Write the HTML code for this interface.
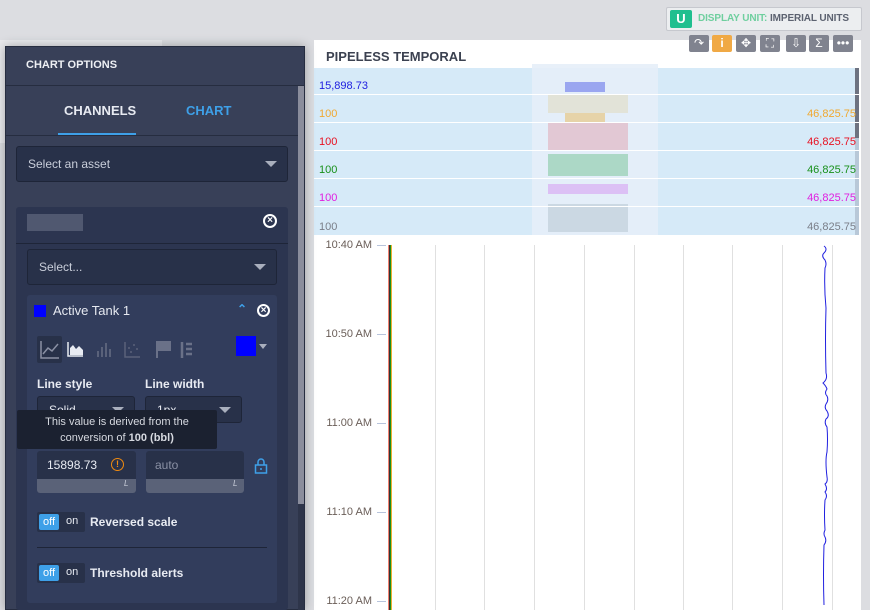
<!DOCTYPE html>
<html><head><style>
*{box-sizing:border-box;margin:0;padding:0}
body{width:870px;height:610px;overflow:hidden;background:#dcdde1;font-family:"Liberation Sans",sans-serif;position:relative}
.a{position:absolute}
.sel{background:#283149;border:1px solid #1e2538;border-radius:3px;color:#c9ceda;font-size:12px;padding-left:11px;display:flex;align-items:center}
.tri{position:absolute;right:10px;top:50%;margin-top:-3px;width:0;height:0;border-left:6px solid transparent;border-right:6px solid transparent;border-top:6px solid #a9afbd}
.t{font-size:11px;color:#6a5e58;text-align:right;width:60px}
.row{position:absolute;left:314px;width:545px;height:27px;font-size:11px}
.row span{position:absolute;bottom:2px}
.tb{position:absolute;top:35px;width:20px;height:17px;background:#80838f;border-radius:2px;color:#fff;font-size:12px;text-align:center;line-height:17px}
</style></head><body>
<div class="a" style="left:0;top:40px;width:162px;height:103px;background:#e9eaed"></div>
<div class="a" style="left:666px;top:7px;width:196px;height:24px;border:1px solid #c6c8ce;background:#eceef0;border-radius:2px"></div>
<div class="a" style="left:670px;top:10px;width:22px;height:18px;background:#1fbf8f;border-radius:2px;color:#fff;font-weight:bold;font-size:13px;text-align:center;line-height:18px">U</div>
<div class="a" style="left:698px;top:13px;font-size:10px;font-weight:bold;color:#5c6270;white-space:nowrap;letter-spacing:-0.1px"><span style="color:#6fcf9f">DISPLAY UNIT:</span> IMPERIAL UNITS</div>
<div class="a" style="left:314px;top:40px;width:547px;height:570px;background:#fff"></div>
<div class="a" style="left:861px;top:40px;width:9px;height:570px;background:#dcdde1"></div>
<div class="a" style="left:326px;top:49px;font-size:13px;font-weight:bold;color:#3b4150">PIPELESS TEMPORAL</div>
<div class="tb" style="left:689px">↷</div>
<div class="tb" style="left:712px;background:#f0a945;font-weight:bold">i</div>
<div class="tb" style="left:736px">✥</div>
<div class="tb" style="left:760px">⛶</div>
<div class="tb" style="left:786px">⇩</div>
<div class="tb" style="left:809px">Σ</div>
<div class="tb" style="left:833px">•••</div>
<div class="a" style="left:314px;top:68px;width:545px;height:167px;background:#d6eaf8"></div>
<div class="a" style="left:532px;top:64px;width:126px;height:171px;background:#e6eef8;opacity:.9"></div>
<div class="a" style="left:565px;top:82px;width:40px;height:10px;background:#9aa6f0"></div>
<div class="a" style="left:548px;top:95px;width:80px;height:18px;background:#e2e3d8"></div>
<div class="a" style="left:565px;top:113px;width:40px;height:10px;background:#e6d3a8"></div>
<div class="a" style="left:548px;top:123px;width:80px;height:28px;background:#e2c8d4"></div>
<div class="a" style="left:548px;top:154px;width:80px;height:22px;background:#acd8c6"></div>
<div class="a" style="left:548px;top:184px;width:80px;height:10px;background:#dcc0f5"></div>
<div class="a" style="left:548px;top:204px;width:80px;height:28px;background:#cbd8e3"></div>
<div class="a" style="left:855px;top:68px;width:4px;height:70px;background:#6d7280"></div>
<div class="a" style="left:855px;top:138px;width:4px;height:97px;background:#b8c8d8"></div>
<div class="row" style="top:68px;border-bottom:1px solid #fff"><span style="left:5px;color:#2020e0">15,898.73</span></div>
<div class="row" style="top:96px;border-bottom:1px solid #fff"><span style="left:5px;color:#f0a830">100</span><span style="right:3px;color:#f0a830">46,825.75</span></div>
<div class="row" style="top:124px;border-bottom:1px solid #fff"><span style="left:5px;color:#e81020">100</span><span style="right:3px;color:#e81020">46,825.75</span></div>
<div class="row" style="top:152px;border-bottom:1px solid #fff"><span style="left:5px;color:#18901a">100</span><span style="right:3px;color:#18901a">46,825.75</span></div>
<div class="row" style="top:180px;border-bottom:1px solid #fff"><span style="left:5px;color:#e020e0">100</span><span style="right:3px;color:#e020e0">46,825.75</span></div>
<div class="row" style="top:208px"><span style="left:5px;color:#7a7e88">100</span><span style="right:3px;color:#7a7e88">46,825.75</span></div>
<svg class="a" style="left:314px;top:235px" width="547" height="375">
<g stroke="#e0e0e0" stroke-width="1">
<line x1="121.5" y1="10" x2="121.5" y2="375"/><line x1="170.5" y1="10" x2="170.5" y2="375"/><line x1="220.5" y1="10" x2="220.5" y2="375"/><line x1="270.5" y1="10" x2="270.5" y2="375"/><line x1="320.5" y1="10" x2="320.5" y2="375"/><line x1="369.5" y1="10" x2="369.5" y2="375"/><line x1="418.5" y1="10" x2="418.5" y2="375"/><line x1="468.5" y1="10" x2="468.5" y2="375"/><line x1="518.5" y1="10" x2="518.5" y2="375"/>
</g>
<g stroke="#b8c4dc"><line x1="63" y1="10.5" x2="72" y2="10.5"/><line x1="63" y1="99.5" x2="72" y2="99.5"/><line x1="63" y1="188.5" x2="72" y2="188.5"/><line x1="63" y1="277.5" x2="72" y2="277.5"/><line x1="63" y1="366.5" x2="72" y2="366.5"/></g>
<rect x="74" y="10" width="1" height="365" fill="#f08070"/><rect x="75" y="10" width="1" height="365" fill="#333"/><rect x="76" y="10" width="1" height="365" fill="#189020"/><rect x="77" y="10" width="1" height="365" fill="#f0b030"/>
<path d="M510 11 q4 3 0 7 q-3 3 1 7 q2 4 0 8 q-1 20 1 40 q-1 30 0 65 q2 6 -3 10 q3 3 4 6 q-3 4 0 7 q2 4 -1 8 q-2 4 1 7 q3 5 -1 8 q-2 4 1 8 q1 12 0 25 q-2 8 0 25 q1 5 -2 7 q3 5 0 8 q3 4 0 8 q-1 15 0 30 q-2 4 0 7 q2 4 -1 8 q-1 30 0 60" fill="none" stroke="#2020e0" stroke-width="1"/>
</svg>
<div class="a t" style="left:312px;top:239px">10:40 AM</div>
<div class="a t" style="left:312px;top:328px">10:50 AM</div>
<div class="a t" style="left:312px;top:417px">11:00 AM</div>
<div class="a t" style="left:312px;top:506px">11:10 AM</div>
<div class="a t" style="left:312px;top:595px">11:20 AM</div>
<div class="a" style="left:5px;top:46px;width:300px;height:564px;background:#384058;border:1px solid #262d40;box-shadow:0 0 10px rgba(0,0,0,.3)"></div>
<div class="a" style="left:6px;top:85px;width:298px;height:1px;background:#262d40"></div>
<div class="a" style="left:26px;top:59px;font-size:11px;font-weight:bold;color:#eef0f4">CHART OPTIONS</div>
<div class="a" style="left:64px;top:103px;font-size:13px;font-weight:bold;color:#e8ebf2">CHANNELS</div>
<div class="a" style="left:186px;top:103px;font-size:13px;font-weight:bold;color:#3ea0e8">CHART</div>
<div class="a" style="left:58px;top:133px;width:78px;height:2px;background:#3ea0e8"></div>
<div class="a" style="left:6px;top:135px;width:292px;height:1px;background:#262d40"></div>
<div class="a" style="left:298px;top:86px;width:6px;height:524px;background:#2e354a"></div>
<div class="a" style="left:298px;top:86px;width:6px;height:418px;background:#8a8d9c"></div>
<div class="a sel" style="left:16px;top:146px;width:272px;height:36px">Select an asset<div class="tri"></div></div>
<div class="a" style="left:16px;top:207px;width:272px;height:403px;background:#2c3550;border-radius:3px"></div>
<div class="a" style="left:16px;top:243px;width:272px;height:1px;background:#1e2538"></div>
<div class="a" style="left:27px;top:214px;width:56px;height:17px;background:#5a6278;opacity:.8"></div>
<div class="a" style="left:263px;top:214px;width:14px;height:14px;border:2px solid #fff;border-radius:50%;color:#fff;font-size:10px;line-height:10px;text-align:center;font-weight:bold">×</div>
<div class="a sel" style="left:27px;top:249px;width:250px;height:36px">Select...<div class="tri"></div></div>
<div class="a" style="left:27px;top:295px;width:250px;height:308px;background:#323d5c;border-radius:3px"></div>
<div class="a" style="left:34px;top:305px;width:12px;height:12px;background:#0000ff"></div>
<div class="a" style="left:53px;top:303px;font-size:13px;color:#e6e9f0">Active Tank 1</div>
<div class="a" style="left:237px;top:302px;font-size:12px;color:#3ea0e8;font-weight:bold">⌃</div>
<div class="a" style="left:257px;top:304px;width:13px;height:13px;border:2px solid #fff;border-radius:50%;color:#fff;font-size:10px;line-height:9px;text-align:center;font-weight:bold">×</div>
<div class="a" style="left:37px;top:336px;width:25px;height:27px;background:#283149;border-radius:2px"></div>
<svg class="a" style="left:40px;top:338px" width="160" height="22" fill="none">
<path d="M1 3v17h18M3 16l5-6 4 3 6-7" stroke="#8a90a4" stroke-width="1.5"/>
<path d="M28 4v14h15" stroke="#e8ebf2" stroke-width="1.5"/><path d="M30 17v-7l3-3 3 4 3-3 4 4v5z" fill="#e8ebf2"/>
<path d="M58 19v-6M62 19v-10M66 19v-14M70 19v-8" stroke="#5a627a" stroke-width="2"/>
<path d="M85 4v15h15M88 10l2 0M93 7l2 0M96 11l2 0M90 14l2 0" stroke="#5a627a" stroke-width="1.5"/>
<path d="M117 3v17M117 4h13v8h-13" fill="#6a7188" stroke="#6a7188" stroke-width="2"/>
<path d="M142 4v16M146 6h6M146 11h6M146 16h6" stroke="#6a7188" stroke-width="2.5"/>
</svg>
<div class="a" style="left:236px;top:336px;width:20px;height:20px;background:#0000ff"></div>
<div class="a" style="left:259px;top:344px;border-left:4px solid transparent;border-right:4px solid transparent;border-top:5px solid #a9afbd"></div>
<div class="a" style="left:37px;top:377px;font-size:12px;font-weight:bold;color:#e8ebf2">Line style</div>
<div class="a" style="left:145px;top:377px;font-size:12px;font-weight:bold;color:#e8ebf2">Line width</div>
<div class="a sel" style="left:37px;top:396px;width:98px;height:27px;color:#e8ebf2">Solid<div class="tri"></div></div>
<div class="a sel" style="left:145px;top:396px;width:97px;height:27px;color:#e8ebf2">1px<div class="tri"></div></div>
<div class="a" style="left:17px;top:410px;width:200px;height:39px;background:#1b2130;color:#d6d9e0;font-size:11px;text-align:center;line-height:16px;padding-top:4px;border-radius:2px">This value is derived from the<br>conversion of <b>100 (bbl)</b></div>
<div class="a" style="left:37px;top:451px;width:99px;height:42px;background:#283149;border-radius:3px;overflow:hidden"><div style="position:absolute;left:0;bottom:0;width:100%;height:14px;background:#5a6278"></div></div>
<div class="a" style="left:47px;top:458px;font-size:12px;color:#e8ebf2">15898.73</div>
<div class="a" style="left:111px;top:458px;width:13px;height:13px;border:1.5px solid #f08a10;border-radius:50%;color:#f08a10;font-size:9px;text-align:center;line-height:10px;font-weight:bold">!</div>
<div class="a" style="left:146px;top:451px;width:98px;height:42px;background:#283149;border-radius:3px;overflow:hidden"><div style="position:absolute;left:0;bottom:0;width:100%;height:14px;background:#5a6278"></div></div>
<div class="a" style="left:155px;top:458px;font-size:12px;color:#8a90a4">auto</div>
<div class="a" style="left:124px;top:479px;font-size:8px;color:#c9ceda;font-style:italic">L</div>
<div class="a" style="left:233px;top:479px;font-size:8px;color:#c9ceda;font-style:italic">L</div>
<svg class="a" style="left:254px;top:458px" width="14" height="16" fill="none" stroke="#3ea0e8" stroke-width="1.5"><rect x="1.5" y="7" width="11" height="8"/><path d="M4 7V4a3 3 0 0 1 6 0v3M7 10v2"/></svg>
<div class="a" style="left:37px;top:512px;width:48px;height:20px;background:#283149;border-radius:2px"></div>
<div class="a" style="left:39px;top:514px;width:20px;height:16px;background:#3ea0e8;border-radius:2px;color:#fff;font-size:11px;text-align:center;line-height:16px">off</div>
<div class="a" style="left:66px;top:515px;font-size:11px;color:#e8ebf2">on</div>
<div class="a" style="left:90px;top:515px;font-size:12px;font-weight:bold;color:#e8ebf2">Reversed scale</div>
<div class="a" style="left:37px;top:547px;width:230px;height:1px;background:#1e2538"></div>
<div class="a" style="left:37px;top:563px;width:48px;height:20px;background:#283149;border-radius:2px"></div>
<div class="a" style="left:39px;top:565px;width:20px;height:16px;background:#3ea0e8;border-radius:2px;color:#fff;font-size:11px;text-align:center;line-height:16px">off</div>
<div class="a" style="left:66px;top:566px;font-size:11px;color:#e8ebf2">on</div>
<div class="a" style="left:90px;top:566px;font-size:12px;font-weight:bold;color:#e8ebf2">Threshold alerts</div>
</body></html>
